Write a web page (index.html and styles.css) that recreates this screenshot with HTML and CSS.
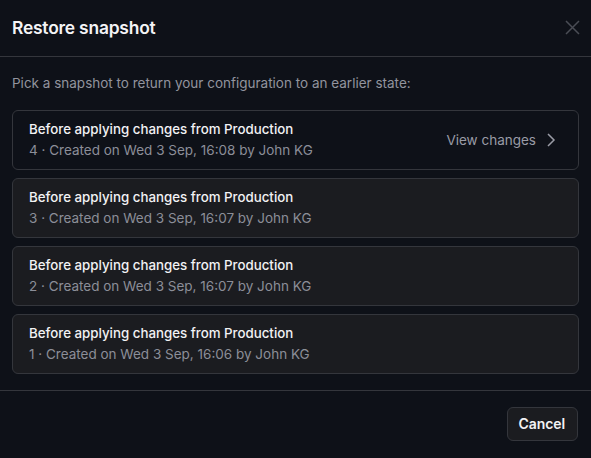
FILE: index.html
```html
<!DOCTYPE html>
<html>
<head>
<meta charset="utf-8">
<link rel="stylesheet" href="styles.css">
</head>
<body>
<div class="dialog">
  <header class="head">
    <h1 class="title">Restore snapshot</h1>
    <button class="close" aria-label="Close">
      <svg width="15" height="15" viewBox="0 0 15 15"><path d="M1 1L14 14M14 1L1 14" stroke="#4a4d55" stroke-width="1.5" fill="none"/></svg>
    </button>
  </header>
  <main class="body">
    <p class="desc">Pick a snapshot to return your configuration to an earlier state:</p>
    <div class="list">
      <div class="card hover">
        <div class="info">
          <div class="name">Before applying changes from Production</div>
          <div class="meta">4 · Created on Wed 3 Sep, 16:08 by John KG</div>
        </div>
        <div class="view">View changes
          <svg width="10" height="16" viewBox="0 0 10 16"><path d="M2 2L8 8L2 14" stroke="#9a9ca6" stroke-width="1.5" fill="none"/></svg>
        </div>
      </div>
      <div class="card">
        <div class="info">
          <div class="name">Before applying changes from Production</div>
          <div class="meta">3 · Created on Wed 3 Sep, 16:07 by John KG</div>
        </div>
      </div>
      <div class="card">
        <div class="info">
          <div class="name">Before applying changes from Production</div>
          <div class="meta">2 · Created on Wed 3 Sep, 16:07 by John KG</div>
        </div>
      </div>
      <div class="card">
        <div class="info">
          <div class="name">Before applying changes from Production</div>
          <div class="meta">1 · Created on Wed 3 Sep, 16:06 by John KG</div>
        </div>
      </div>
    </div>
  </main>
  <footer class="foot">
    <button class="cancel">Cancel</button>
  </footer>
</div>
</body>
</html>
```
FILE: styles.css
```css
* { box-sizing: border-box; }
html, body { margin: 0; padding: 0; background: #0e1118; }
body { font-family: Inter, "Noto Sans", sans-serif; color: #f2f2f4; width: 591px; height: 458px; overflow: hidden; }
.dialog { display: flex; flex-direction: column; height: 458px; }
.head { height: 57px; display: flex; align-items: center; justify-content: space-between; padding: 0 12px 1px; border-bottom: 1px solid #34363c; }
.title { margin: 0; font-size: 17.4px; font-weight: 600; letter-spacing: -0.2px; color: #f4f4f6; }
.close { background: none; border: 0; padding: 0; margin-right: -1px; display: flex; }
.body { padding: 17px 12px 16px; border-bottom: 1px solid #34363c; }
.desc { margin: 0 0 18px; font-size: 13.5px; color: #92949e; line-height: 18px; }
.list { display: flex; flex-direction: column; gap: 8px; }
.card { height: 60px; border: 1px solid #34363c; border-radius: 6px; background: #1b1c20; display: flex; align-items: center; justify-content: space-between; padding: 0 16px 2px 16px; }
.card.hover { background: #0e1118; }
.info { display: flex; flex-direction: column; gap: 3px; }
.name { font-size: 13.3px; font-weight: 500; color: #f2f2f4; line-height: 18px; }
.meta { font-size: 13.5px; color: #8c8e98; line-height: 18px; }
.view { display: flex; align-items: center; gap: 10px; font-size: 13.5px; color: #9a9ca6; margin: 2px 6px 0 0; }
.foot { flex: 1; display: flex; justify-content: flex-end; align-items: center; padding: 0 13px 2px; }
.cancel { font-family: Inter, sans-serif; font-size: 14px; font-weight: 600; color: #f2f2f4; background: #1b1c20; border: 1px solid #34363c; border-radius: 6px; height: 34px; padding: 0 12px 0 11px; letter-spacing: -0.1px; }
```
